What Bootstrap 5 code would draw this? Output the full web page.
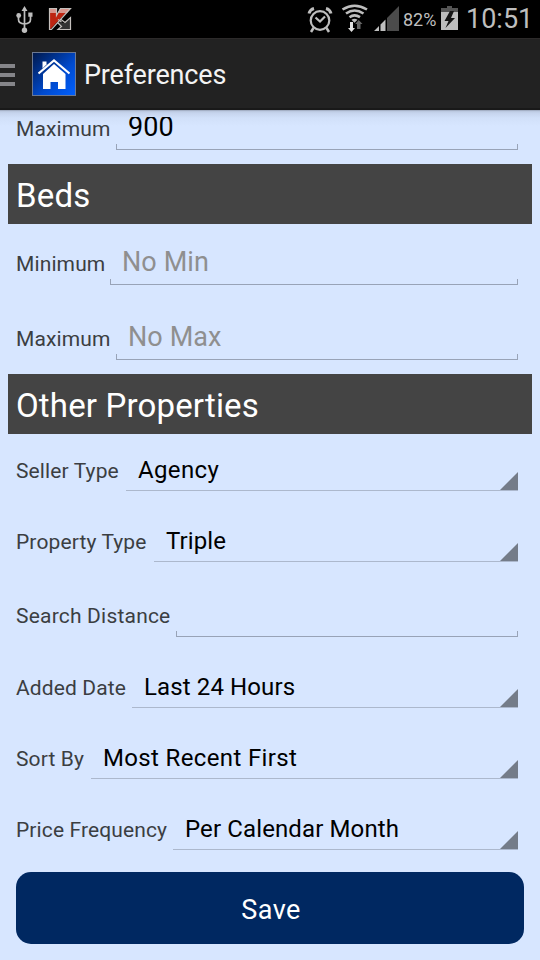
<!DOCTYPE html>
<html lang="en">
<head>
<meta charset="utf-8">
<meta name="viewport" content="width=device-width, initial-scale=1">
<title>Preferences</title>
<link href="https://cdn.jsdelivr.net/npm/bootstrap@5.3.0/dist/css/bootstrap.min.css" rel="stylesheet">
<style>
body{font-family:Roboto,sans-serif;background:#d7e6ff;width:540px;height:960px;overflow:hidden;line-height:1}
svg{display:block;flex:none}
.status{height:38px;background:#000;color:#bebebe;padding-left:16px;padding-right:8px}
.pct{font-size:18px;line-height:38px;margin-left:4px;width:37px;white-space:nowrap;padding-top:1px}
.clock{font-size:27px;line-height:38px;margin-left:8px;width:66px;white-space:nowrap}
.appbar{height:72px;background:#222;border-top:1px solid #2c2a2a;border-bottom:2px solid #191919}
.appbar h1{font-size:27px;line-height:73px;color:#f3f3f3;margin-left:8px;letter-spacing:-.18px}
.scroller{height:850px;overflow:hidden;padding:0 8px;background:linear-gradient(#8f99ad 0,#b9c6dd 1px,#c6d4ed 3px,#d1e0f9 8px,#d7e6ff 16px)}
.pref{height:75px;padding:0 14px 14px 8px;color:#3b3e42}
.pref.pick{height:71px}
.pref .name{font-size:21px;line-height:36px;padding-top:22px;flex:none;white-space:nowrap;letter-spacing:.12px}
.pref.pick .name{padding-top:19px}
.pref .n-dist{letter-spacing:.2px}
.entry{font-size:27px;line-height:36px;padding:20px 0 0 12px;color:#000;white-space:nowrap;letter-spacing:.1px;
 background:linear-gradient(#98a3b7,#98a3b7) left bottom/100% 1px no-repeat,linear-gradient(#98a3b7,#98a3b7) left bottom/1px 6px no-repeat,linear-gradient(#98a3b7,#98a3b7) right bottom/1px 6px no-repeat}
.entry.hint{color:#8f8f8f}
.pick .entry{font-size:24px;padding-top:18px;letter-spacing:.12px;
 background:linear-gradient(135deg,transparent 49%,#747c89 51%) right bottom 1px/18px 18px no-repeat,linear-gradient(#acb8cd,#acb8cd) left bottom/100% 1px no-repeat}
.pick .entry.wide{letter-spacing:.35px}
.clipped{height:47px;margin-top:7px;overflow:hidden}
.clipped .pref{margin-top:-28px}
.n-min{width:94px}.n-max{width:100px}.n-seller{width:110px}.n-prop{width:138px}.n-dist{width:160px}.n-date{width:116px}.n-sort{width:75px}.n-freq{width:157px}
.section{height:60px;background:#444;color:#fff;font-size:33px;line-height:64px;padding-left:8px;letter-spacing:.16px}
.save{height:72px;margin:8px 8px 0;width:508px;background:#002861;color:#fff;border:0;border-radius:15px;font-size:27px;line-height:72px;padding:2px 0 0 2px;letter-spacing:.5px}
</style>
<script src="https://cdn.jsdelivr.net/npm/bootstrap@5.3.0/dist/js/bootstrap.bundle.min.js"></script>
</head>
<body>
<div class="status d-flex align-items-start">
 <svg width="60" height="38" viewBox="16 0 60 38">
  <g fill="none" stroke="#bebebe" stroke-width="1.7"><path d="M24.500 10v20M18.500 16v3.500q0 4 6 4.500M30.500 15v4.500q0 4-6 4.500"/></g>
  <path d="M24.500 6l3 5h-6zM28.300 12.500h4.200v4.200h-4.200z" fill="#bebebe"/><circle cx="18.700" cy="15.500" r="2.400" fill="#bebebe"/><circle cx="24.500" cy="30.300" r="2.700" fill="#bebebe"/>
  <path d="M58 22l6 1 6.500-5v12H58l3.500-3z" fill="#333"/>
  <path d="M49 8.500h7.500v7l4-7H70L49.500 30z" fill="#bd2512"/>
  <path d="M49 8.500h7.500v4.500H49zM60 8.500h10l-3 4.500h-9z" fill="#d9958c"/>
  <path d="M49.500 29.500v-21h7v7l4-7H70.500L51.500 29.500zM58 19.500l3.500 2.500M61 19.500l4 3 5.500-5v12H58l3.500-3-3.500-3.500" fill="none" stroke="#c4c0bd" stroke-width="1.200"/>
 </svg>
 <svg class="ms-auto" width="94" height="38" viewBox="305 0 94 38">
  <g fill="none" stroke="#bebebe"><circle cx="320" cy="20.500" r="9.300" stroke-width="2.200"/><path d="M315.500 17.500l4.500 4 5-5" stroke-width="2.200"/><path d="M309 13.500q1-4 5-5M331 13.500q-1-4-5-5" stroke-width="3"/><path d="M313.500 28l-2.500 4M326.500 28l2.500 4" stroke-width="2.500"/></g>
  <g fill="none" stroke="#bebebe" stroke-width="2.600"><path d="M342.500 9.500q12-7.500 24.500 0M346 13.500q8.500-6 17.500 0M349.500 17.200q5-3.600 10.500 0"/></g>
  <path d="M351.500 19.700q3-1.800 6 0l-3 3z" fill="#bebebe"/>
  <path d="M350 22h3v6h2l-3.500 4-3.500-4h2z" fill="#e2e2e2"/><path d="M357 29h3.500v-5h2L358.700 20l-3.500 4h1.800z" fill="#666"/>
  <path d="M374 31l5-5v5zM380.500 24.500l5-5V31h-5z" fill="#bebebe"/><path d="M387 18L399 6v25h-12z" fill="#4b4b4b"/>
 </svg>
 <span class="pct">82%</span>
 <svg width="18" height="38" viewBox="440 0 18 38"><path d="M441 8h6V6h5v2h6v4h-17z" fill="#555"/><path d="M441 12h17v18h-17z" fill="#bebebe"/><path d="M450 11l-5.500 10h4l-3 7 9.500-10H451l3-7z" fill="#151515"/></svg>
 <span class="clock">10:51</span>
</div>
<header class="appbar d-flex align-items-start">
 <svg width="76" height="60" viewBox="0 39 76 60">
  <defs><linearGradient id="sky" x1="0" y1="0" x2="1" y2="1"><stop offset="0" stop-color="#00184a"/><stop offset=".6" stop-color="#004bd0"/><stop offset="1" stop-color="#0060ff"/></linearGradient></defs>
  <path d="M0 64h15v4H0zM0 73h15v4H0zM0 82h15v4H0z" fill="#858589"/>
  <rect x="32.500" y="52.500" width="43" height="43" fill="url(#sky)" stroke="#6b7892"/>
  <path d="M42.500 61.500h4v3l-4 4z" fill="#fff"/>
  <path d="M38.500 73.500L54 60.500l15.500 13" fill="none" stroke="#fff" stroke-width="2.200"/>
  <path d="M54 64l11.500 10V89H58v-7h-7.500v7h-7.500V74z" fill="#fff"/>
 </svg>
 <h1 class="mb-0 fw-normal">Preferences</h1>
</header>
<main class="scroller d-flex flex-column">
 <div class="clipped"><div class="pref d-flex"><span class="name n-max">Maximum</span><span class="entry flex-grow-1">900</span></div></div>
 <h2 class="section fw-normal mb-0">Beds</h2>
 <div class="pref d-flex"><span class="name n-min">Minimum</span><span class="entry hint flex-grow-1">No Min</span></div>
 <div class="pref d-flex"><span class="name n-max">Maximum</span><span class="entry hint flex-grow-1">No Max</span></div>
 <h2 class="section fw-normal mb-0">Other Properties</h2>
 <div class="pref pick d-flex"><span class="name n-seller">Seller Type</span><span class="entry wide flex-grow-1">Agency</span></div>
 <div class="pref pick d-flex"><span class="name n-prop">Property Type</span><span class="entry flex-grow-1">Triple</span></div>
 <div class="pref d-flex"><span class="name n-dist">Search Distance</span><span class="entry flex-grow-1"></span></div>
 <div class="pref pick d-flex"><span class="name n-date">Added Date</span><span class="entry flex-grow-1">Last 24 Hours</span></div>
 <div class="pref pick d-flex"><span class="name n-sort">Sort By</span><span class="entry wide flex-grow-1">Most Recent First</span></div>
 <div class="pref pick d-flex"><span class="name n-freq">Price Frequency</span><span class="entry flex-grow-1">Per Calendar Month</span></div>
 <button type="button" class="btn save">Save</button>
</main>
</body>
</html>
